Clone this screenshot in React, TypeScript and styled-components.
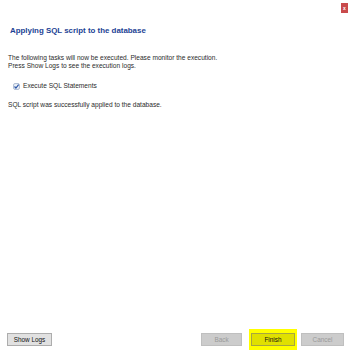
import React from 'react';
import styled, { createGlobalStyle } from 'styled-components';

const GlobalStyle = createGlobalStyle`
  html, body {
    margin: 0;
    padding: 0;
    background: #ffffff;
  }
  body {
    font-family: "Liberation Sans", Arial, sans-serif;
  }
`;

const Window = styled.div`
  width: 350px;
  height: 354px;
  display: flex;
  flex-direction: column;
  background: #ffffff;
  overflow: hidden;
`;

const TopBar = styled.div`
  display: flex;
  justify-content: flex-end;
  padding: 3px 2px 0 0;
  height: 13px;
`;

const CloseButton = styled.div`
  width: 7px;
  height: 10px;
  background: #c94a4c;
  color: #fff;
  font-size: 5px;
  font-weight: bold;
  display: flex;
  align-items: center;
  justify-content: center;
  line-height: 1;
`;

const Title = styled.h1`
  margin: 10px 0 0 10px;
  font-size: 7.9px;
  font-weight: bold;
  color: #1c3f94;
  line-height: 9px;
`;

const Body = styled.div`
  padding: 19px 0 0 8px;
  font-size: 6.6px;
  color: #2b2b2b;
  line-height: 8px;
`;

const Paragraph = styled.p`
  margin: 0;
`;

const TaskRow = styled.div`
  display: flex;
  align-items: center;
  gap: 3px;
  margin: 12px 0 0 5px;
`;

const Status = styled.p`
  margin: 11px 0 0 0;
`;

const Footer = styled.div`
  margin-top: auto;
  display: flex;
  align-items: center;
  padding: 0 6px 4px 7px;
`;

const Spacer = styled.div`
  flex: 1;
`;

const Button = styled.button<{ $disabled?: boolean; $width: number }>`
  width: ${(p) => p.$width}px;
  height: 13px;
  padding: 0;
  font-family: "Liberation Sans", Arial, sans-serif;
  font-size: 6.4px;
  border: 1px solid ${(p) => (p.$disabled ? '#bfbfbf' : '#adadad')};
  background: ${(p) => (p.$disabled ? '#cccccc' : '#e1e1e1')};
  color: ${(p) => (p.$disabled ? '#9a9a9a' : '#111')};
`;

const Highlight = styled.div`
  background: #ffff00;
  padding: 4px 2px;
  margin: 0 4px 0 7px;
  display: flex;
`;

const FinishButton = styled(Button)`
  background: #e0e000;
  border-color: #a6a640;
  color: #111;
`;

const CheckIcon = () => (
  <svg width="7" height="7" viewBox="0 0 6 6">
    <rect x="0.5" y="0.5" width="5" height="5" rx="1.2" fill="#eef2f8" stroke="#8ca0c0" strokeWidth="0.6" />
    <path d="M1.3 3 L2.5 4.3 L4.8 1.4" fill="none" stroke="#2a56a8" strokeWidth="1" />
  </svg>
);

const App: React.FC = () => (
  <>
    <GlobalStyle />
    <Window>
      <TopBar>
        <CloseButton>x</CloseButton>
      </TopBar>
      <Title>Applying SQL script to the database</Title>
      <Body>
        <Paragraph>The following tasks will now be executed. Please monitor the execution.</Paragraph>
        <Paragraph>Press Show Logs to see the execution logs.</Paragraph>
        <TaskRow>
          <CheckIcon />
          <span>Execute SQL Statements</span>
        </TaskRow>
        <Status>SQL script was successfully applied to the database.</Status>
      </Body>
      <Footer>
        <Button $width={45}>Show Logs</Button>
        <Spacer />
        <Button $width={41} $disabled>Back</Button>
        <Highlight>
          <FinishButton $width={44}>Finish</FinishButton>
        </Highlight>
        <Button $width={43} $disabled>Cancel</Button>
      </Footer>
    </Window>
  </>
);

export default App;
